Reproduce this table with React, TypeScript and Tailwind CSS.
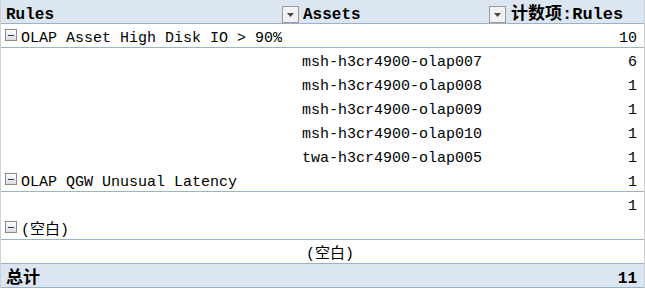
import React from 'react';

const font = { fontFamily: '"Liberation Mono", "Noto Sans CJK SC", monospace' };

const Minus: React.FC = () => (
  <span className="inline-flex items-center justify-center w-[12px] h-[12px] mt-[5px] border border-[#8c8c8c] bg-gradient-to-b from-[#fdfdfd] to-[#d9dde3] mr-[4px] shrink-0">
    <span className="block w-[6px] h-[1px] bg-[#333]" />
  </span>
);

const Drop: React.FC = () => (
  <span className="inline-flex items-center justify-center w-[17px] h-[17px] mt-[6px] border border-[#9a9a9a] bg-[#f2f2f2] shrink-0">
    <svg width="7" height="4" viewBox="0 0 7 4">
      <path d="M0 0h7L3.5 4z" fill="#444" />
    </svg>
  </span>
);

const rows: { asset: string; n: number }[] = [
  { asset: 'msh-h3cr4900-olap007', n: 6 },
  { asset: 'msh-h3cr4900-olap008', n: 1 },
  { asset: 'msh-h3cr4900-olap009', n: 1 },
  { asset: 'msh-h3cr4900-olap010', n: 1 },
  { asset: 'twa-h3cr4900-olap005', n: 1 },
];

const txt = 'mt-[7px] leading-[16px]';

export default function App() {
  return (
    <div className="w-[645px] h-[289px] bg-white text-black text-[15px] overflow-hidden" style={font}>
      <div className="border-l border-r border-[#d0d0d0] w-[645px]">
        {/* header */}
        <div className="flex h-[24px] items-start bg-[#dce6f1] border-b border-[#95b3d7] font-bold">
          <div className={`w-[281px] pl-[5px] text-[16px] ${txt}`}>Rules</div>
          <Drop />
          <div className={`w-[190px] pl-[4px] text-[16px] ${txt}`}>Assets</div>
          <Drop />
          <div className={`flex-1 pl-[5px] text-[17px] ${txt}`}>计数项:Rules</div>
        </div>

        {/* OLAP Asset High Disk IO */}
        <div className="flex h-[24px] items-start border-b border-[#95b3d7] pl-[4px]">
          <Minus />
          <span className={`flex-1 whitespace-pre ${txt}`}>OLAP Asset High Disk IO &gt; 90%</span>
          <span className={`pr-[7px] ${txt}`}>10</span>
        </div>
        {rows.map((r) => (
          <div key={r.asset} className="flex h-[24px] items-start">
            <div className="w-[301px]" />
            <div className={`flex-1 ${txt}`}>{r.asset}</div>
            <div className={`pr-[7px] ${txt}`}>{r.n}</div>
          </div>
        ))}

        {/* OLAP QGW */}
        <div className="flex h-[24px] items-start border-b border-[#95b3d7] pl-[4px]">
          <Minus />
          <span className={`flex-1 ${txt}`}>OLAP QGW Unusual Latency</span>
          <span className={`pr-[7px] ${txt}`}>1</span>
        </div>
        <div className="flex h-[24px] items-start justify-end">
          <span className={`pr-[7px] ${txt}`}>1</span>
        </div>

        {/* blank */}
        <div className="flex h-[24px] items-start border-b border-[#95b3d7] pl-[4px]">
          <Minus />
          <span className={txt}>(空白)</span>
        </div>
        <div className="flex h-[24px] items-start border-b border-[#95b3d7]">
          <div className="w-[305px]" />
          <span className={txt}>(空白)</span>
        </div>

        {/* total */}
        <div className="flex h-[24px] items-start bg-[#dce6f1] border-b border-[#95b3d7] font-bold pl-[5px]">
          <span className={`flex-1 text-[17px] ${txt}`}>总计</span>
          <span className={`pr-[7px] text-[16px] ${txt}`}>11</span>
        </div>
      </div>
    </div>
  );
}
